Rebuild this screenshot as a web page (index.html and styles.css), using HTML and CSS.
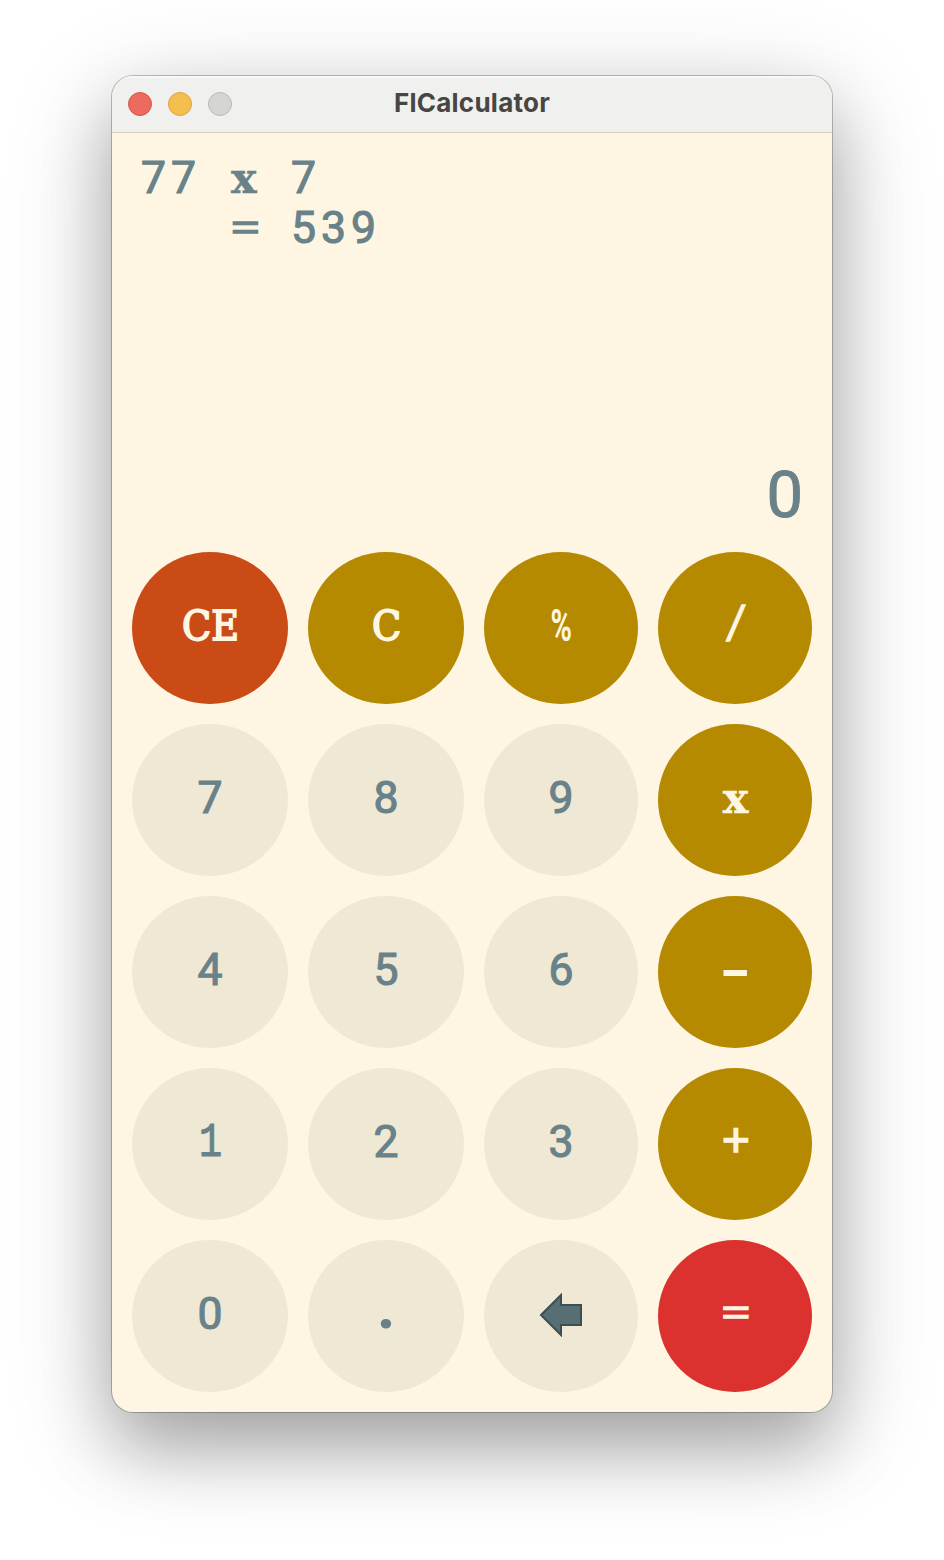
FILE: index.html
```html
<!DOCTYPE html>
<html lang="en">
<head>
<meta charset="utf-8">
<title>FlCalculator</title>
<link rel="stylesheet" href="styles.css">
</head>
<body>
<main class="window">
  <header class="titlebar">
    <div class="lights"><span class="light close"></span><span class="light minimize"></span><span class="light disabled"></span></div>
    <h1 class="title">FlCalculator</h1>
  </header>
  <section class="display">
    <pre class="history"><span class="digits">77</span> <span class="slab">x</span> <span class="digits">7</span>
   <span class="sign equal-sign">=</span> <span class="digits">539</span></pre>
    <div class="entry">0</div>
  </section>
  <section class="keys">
    <button class="key clear"><span class="caps">CE</span></button>
    <button class="key op"><span class="caps">C</span></button>
    <button class="key op"><span class="percent">%</span></button>
    <button class="key op"><span class="slash">/</span></button>
    <button class="key"><span>7</span></button>
    <button class="key"><span>8</span></button>
    <button class="key"><span>9</span></button>
    <button class="key op"><span class="slab">x</span></button>
    <button class="key"><span>4</span></button>
    <button class="key"><span>5</span></button>
    <button class="key"><span>6</span></button>
    <button class="key op"><span class="minus">-</span></button>
    <button class="key"><span class="one">1</span></button>
    <button class="key"><span>2</span></button>
    <button class="key"><span>3</span></button>
    <button class="key op"><span class="sign">+</span></button>
    <button class="key"><span>0</span></button>
    <button class="key"><span class="point">.</span></button>
    <button class="key" aria-label="Backspace"><svg class="arrow" viewBox="0 0 44 44"><path d="M2 22 22 2V12H42V32H22V42Z"/></svg></button>
    <button class="key equals"><span class="sign equal-sign">=</span></button>
  </section>
</main>
</body>
</html>
```
FILE: styles.css
```css
* { box-sizing: border-box; }
body { margin: 0; min-height: 1560px; background: #fff; padding: 76px 112px; }
.window {
  width: 720px; height: 1336px; border-radius: 21px; overflow: hidden;
  background: #fef6e2;
  box-shadow: 0 0 0 1px rgba(0,0,0,.24), 0 36px 68px rgba(0,0,0,.25), 0 24px 110px rgba(0,0,0,.19);
}
.titlebar {
  height: 57px; display: grid; grid-template-columns: 108px 1fr 108px; align-items: center;
  background: #f0f0ee; border-bottom: 1px solid #d5d0c2; box-shadow: inset 0 2px #f8f8f7;
}
.lights { display: flex; gap: 16px; padding-left: 16px; }
.light { width: 24px; height: 24px; border-radius: 50%; border: 1px solid; flex: none; }
.close { background: #ed6a5e; border-color: #d65549; }
.minimize { background: #f5bf4f; border-color: #d9a33c; }
.disabled { background: #d5d5d3; border-color: #b8b8b6; }
.title { margin: 0; padding-bottom: 4px; text-align: center; font: 700 26px Inter, sans-serif; letter-spacing: .25px; color: #464645; }
.display {
  height: 419px; padding: 22px 29px 12px; display: flex; flex-direction: column; justify-content: space-between;
  color: #69828a;
}
.history { margin: 0; font: 50px/50px "Liberation Mono", monospace; }
.history .digits { font: 44.5px/40px Roboto, sans-serif; letter-spacing: 5px; -webkit-text-stroke: 1.1px; }
.history .slab { display: inline-block; width: 30px; line-height: 40px; }
.entry { text-align: right; font: 65px/90px Roboto, sans-serif; -webkit-text-stroke: 1px; }
.keys { display: grid; grid-template-columns: 156px 156px 154px 154px; grid-auto-rows: 152px; gap: 20px; padding: 0 20px; }
.key {
  border: 0; padding: 0 0 5px; border-radius: 50%; background: #eee8d5; color: #69828a;
  display: flex; align-items: center; justify-content: center;
  font: 44.5px/50px Roboto, sans-serif; -webkit-text-stroke: 1.1px;
}
.op { background: #b58900; color: #fdf6e3; }
.clear { background: #cb4b16; color: #fdf6e3; }
.equals { background: #dc322f; color: #fdf6e3; }
.slab { font: 700 43px/50px "DejaVu Serif", serif; -webkit-text-stroke: .4px; }
.key .slab { padding: 1px 0 0 1px; }
.caps { padding: 0 0 0 2px; font: 41px/50px "DejaVu Serif", serif; -webkit-text-stroke: 1.8px; transform: scaleX(.93); }
.sign { font: 48px/50px "Liberation Mono", monospace; -webkit-text-stroke: 1.4px; }
.key .sign { padding: 3px 0 0 2px; }
.history .sign { display: inline-block; width: 30px; line-height: 40px; }
.sign.equal-sign { -webkit-text-stroke: 2.2px; transform: scaleY(.7); }
.one { padding-top: 3px; font: 48px/50px "Liberation Mono", monospace; -webkit-text-stroke: 1.2px; transform: scaleX(.8); }
.slash { padding: 5px 0 0 3px; font: 50px/50px "Liberation Mono", monospace; -webkit-text-stroke: 1.4px; transform: scaleX(.78); }
.minus { padding: 6px 0 0 1px; font: 700 50px/50px "Liberation Mono", monospace; -webkit-text-stroke: 0; transform: scaleX(1.65); }
.percent { font: 700 44px/50px Roboto, sans-serif; -webkit-text-stroke: 0; transform: scaleX(.66); }
.point { padding-bottom: 10px; font: 900 60px/50px Roboto, sans-serif; -webkit-text-stroke: 0; transform: scale(.95); }
.arrow { width: 44px; height: 44px; margin-top: 3px; fill: #586e75; stroke: #3d4d52; stroke-width: 2; }
```
